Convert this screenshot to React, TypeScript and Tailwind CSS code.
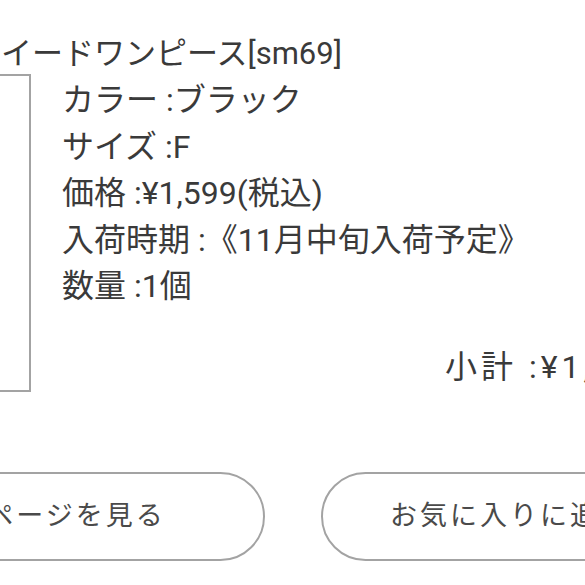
import React from "react";

export default function App() {
  const lines = [
    "カラー :ブラック",
    "サイズ :F",
    "価格 :¥1,599(税込)",
    "入荷時期 :《11月中旬入荷予定》",
    "数量 :1個",
  ];
  return (
    <div className="w-[585px] h-[585px] overflow-hidden bg-white text-[#3a3a3a] font-[Roboto,'Noto_Sans_CJK_JP',sans-serif]">
      <div className="pt-[31px]">
        <div className="ml-[-30px] whitespace-nowrap text-[31px] leading-[46px]">
          ツイードワンピース[sm69]
        </div>
      </div>
      <div className="flex items-start mt-[-3px]">
        <div className="shrink-0 w-[120px] ml-[-89px] h-[318px] border-2 border-[#a3a3a3]" />
        <div className="ml-[31px] pt-[3px] flex flex-col text-[32px] leading-[46.5px] whitespace-nowrap">
          {lines.map((l) => (
            <div key={l}>{l}</div>
          ))}
          <div className="mt-[34px] pl-[383px] tracking-[4px]">小計 :¥1,599</div>
        </div>
      </div>
      <div className="flex gap-[56px] ml-[-173px] mt-[80px]">
        <div className="shrink-0 w-[438px] h-[89px] rounded-full border-2 border-[#a3a3a3] flex items-center justify-center text-[27px] tracking-[3px] text-[#4a4a4a] whitespace-nowrap">
          商品ページを見る
        </div>
        <div className="shrink-0 w-[438px] h-[89px] rounded-full border-2 border-[#a3a3a3] flex items-center justify-center text-[27px] tracking-[3px] text-[#4a4a4a] whitespace-nowrap">
          お気に入りに追加する
        </div>
      </div>
    </div>
  );
}
